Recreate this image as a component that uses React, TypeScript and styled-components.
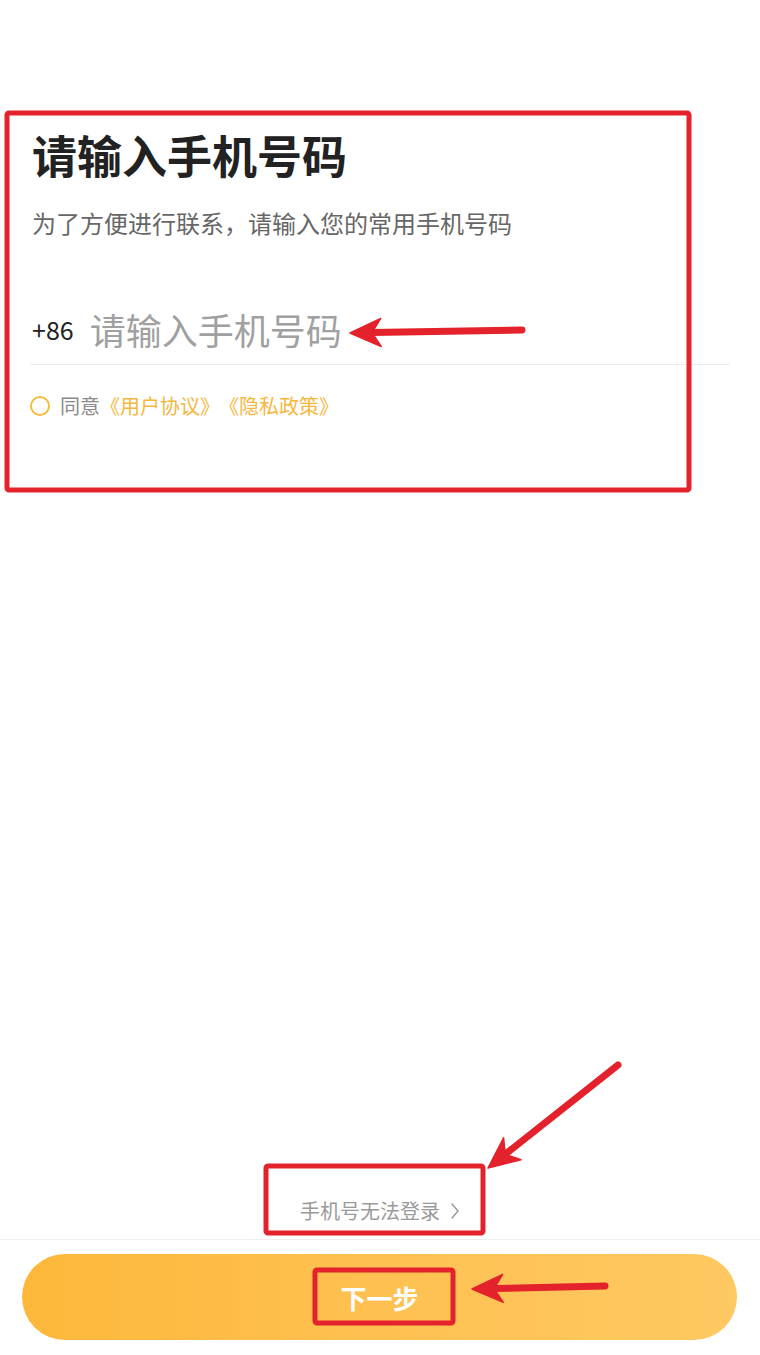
import * as React from "react";
import styled, { createGlobalStyle } from "styled-components";

const GlobalStyle = createGlobalStyle`
    html, body {
        margin: 0;
        padding: 0;
        background: #ffffff;
    }
    body {
        font-family: "Noto Sans CJK SC", "Noto Sans", sans-serif;
        color: #222222;
    }
`;

const Page = styled.div`
    position: relative;
    display: flex;
    flex-direction: column;
    width: 760px;
    min-height: 1355px;
    background: #ffffff;
`;

const Content = styled.section`
    display: flex;
    flex-direction: column;
    padding: 128px 30px 0 30px;
`;

const Title = styled.h1`
    margin: 0;
    padding-left: 2px;
    font-size: 45px;
    line-height: 53px;
    font-weight: 700;
    color: #222222;
`;

const Subtitle = styled.p`
    margin: 24px 0 0 0;
    padding-left: 2px;
    font-size: 24px;
    line-height: 35px;
    color: #666666;
`;

const PhoneRow = styled.div`
    display: flex;
    align-items: center;
    gap: 16px;
    height: 71px;
    margin-top: 53px;
    padding-left: 2px;
    border-bottom: 1px solid #ebebeb;
`;

const AreaCode = styled.span`
    font-size: 25px;
    color: #222222;
`;

const PhoneInput = styled.input`
    flex: 1;
    min-width: 0;
    border: none;
    outline: none;
    padding: 0;
    background: transparent;
    font-family: inherit;
    font-size: 36px;
    line-height: 50px;
    color: #222222;

    &::placeholder {
        color: #a0a0a0;
    }
`;

const Agreement = styled.label`
    display: flex;
    align-items: center;
    gap: 10px;
    margin-top: 27px;
    font-size: 20px;
    line-height: 28px;
    color: #8a8a8a;
`;

const Radio = styled.span`
    box-sizing: border-box;
    width: 20px;
    height: 20px;
    border-radius: 50%;
    border: 2px solid #f6bb3c;
`;

const Link = styled.a`
    color: #f5b73e;
    text-decoration: none;

    & + & {
        margin-left: 9px;
    }
`;

const Spacer = styled.div`
    flex: 1;
`;

const HelpLink = styled.div`
    display: flex;
    align-items: center;
    justify-content: center;
    gap: 10px;
    margin-bottom: 14px;
    font-size: 20px;
    line-height: 28px;
    color: #9a9a9a;

    > svg {
        width: 10px;
        height: 18px;
    }
`;

const Footer = styled.footer`
    border-top: 1px solid #eeeeee;
    padding: 14px 23px 15px 22px;
`;

const NextButton = styled.button`
    width: 100%;
    height: 86px;
    border: none;
    border-radius: 43px;
    background: linear-gradient(90deg, #fdb83a 0%, #fec255 60%, #fec961 100%);
    color: #ffffff;
    font-family: inherit;
    font-size: 26px;
    font-weight: 600;
`;

const Overlay = styled.svg`
    position: absolute;
    top: 0;
    left: 0;
    width: 760px;
    height: 1355px;
    pointer-events: none;
`;

const RED = "#e4222c";

function Arrow(props: { from: [number, number]; to: [number, number] }) {
    const [x1, y1] = props.from;
    const [x2, y2] = props.to;
    const len = Math.hypot(x2 - x1, y2 - y1);
    const ux = (x2 - x1) / len;
    const uy = (y2 - y1) / len;
    const px = -uy;
    const py = ux;
    const head = 31;
    const half = 14;
    const notch = 22;
    const bx = x2 - ux * head;
    const by = y2 - uy * head;
    const nx = x2 - ux * notch;
    const ny = y2 - uy * notch;
    const pts = [
        [x2, y2],
        [bx + px * half, by + py * half],
        [nx, ny],
        [bx - px * half, by - py * half],
    ].map(p => p.join(",")).join(" ");
    return <g>
        <line x1={x1} y1={y1} x2={nx} y2={ny} stroke={RED} strokeWidth={7} strokeLinecap="round" />
        <polygon points={pts} fill={RED} strokeLinejoin="round" stroke={RED} strokeWidth={1.5} />
    </g>
}

function Marker(props: { x: number; y: number; w: number; h: number }) {
    return <rect x={props.x} y={props.y} width={props.w} height={props.h}
        rx={2} fill="none" stroke={RED} strokeWidth={5} />
}

export default function App() {
    return <Page>
        <GlobalStyle />
        <Content>
            <Title>请输入手机号码</Title>
            <Subtitle>为了方便进行联系，请输入您的常用手机号码</Subtitle>
            <PhoneRow>
                <AreaCode>+86</AreaCode>
                <PhoneInput type="tel" placeholder="请输入手机号码" />
            </PhoneRow>
            <Agreement>
                <Radio />
                <span>
                    同意<Link>《用户协议》</Link><Link>《隐私政策》</Link>
                </span>
            </Agreement>
        </Content>
        <Spacer />
        <HelpLink>
            手机号无法登录
            <svg viewBox="0 0 10 18" fill="none">
                <path d="M2 2 L8 9 L2 16" stroke="#9a9a9a" strokeWidth="1.5" strokeLinecap="round" strokeLinejoin="round" />
            </svg>
        </HelpLink>
        <Footer>
            <NextButton>下一步</NextButton>
        </Footer>

        <Overlay viewBox="0 0 760 1355">
            <Marker x={7} y={113} w={682} h={377} />
            <Arrow from={[522, 330]} to={[350, 333]} />
            <Marker x={266} y={1166} w={217} h={67} />
            <Arrow from={[618, 1065]} to={[488, 1168]} />
            <Marker x={315} y={1270} w={138} h={53} />
            <Arrow from={[605, 1286]} to={[472, 1289]} />
        </Overlay>
    </Page>
}
